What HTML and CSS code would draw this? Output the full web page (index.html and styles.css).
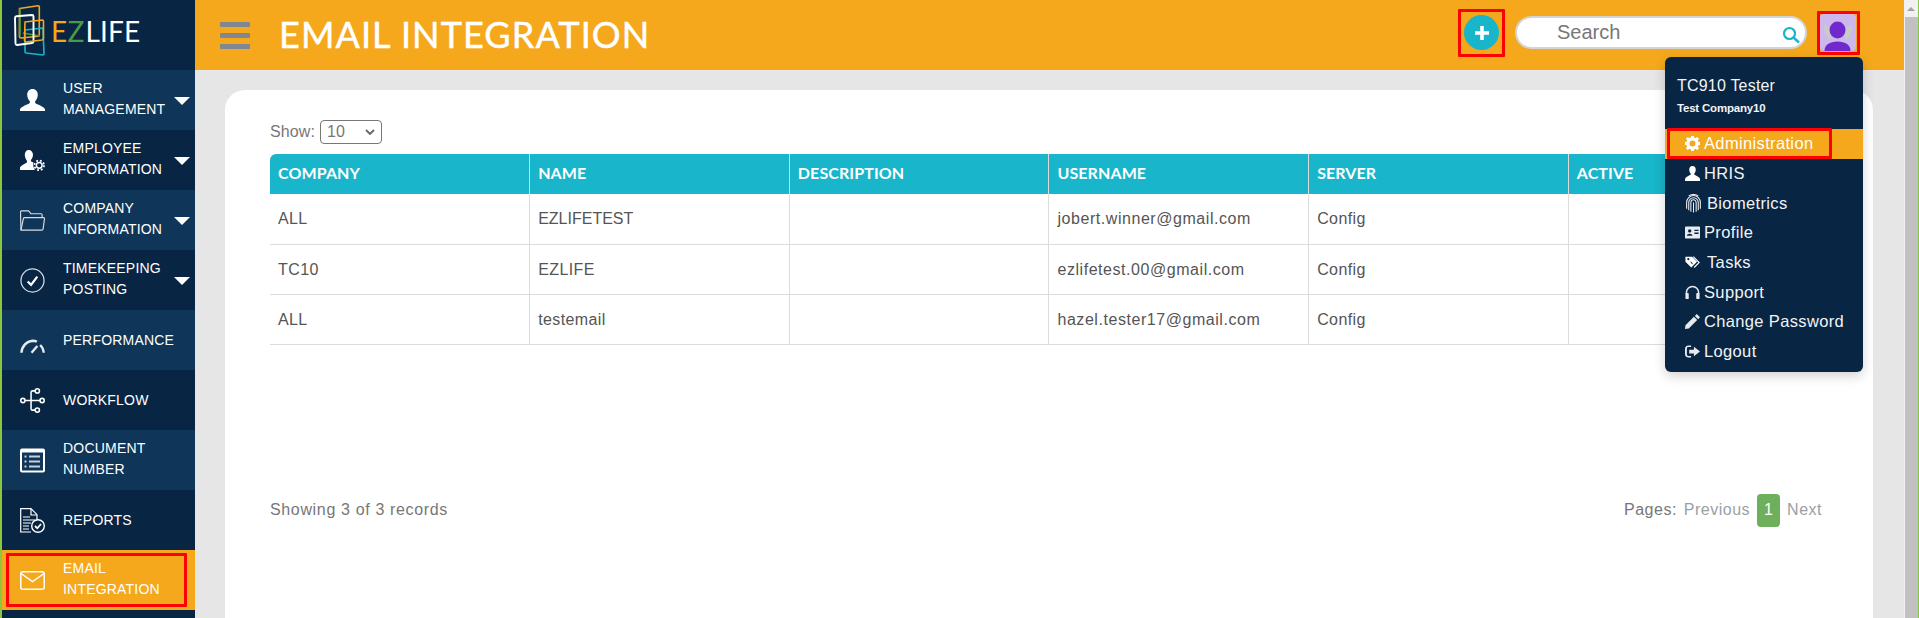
FILE: index.html
```html
<!DOCTYPE html>
<html lang="en">
<head>
<meta charset="utf-8">
<title>Email Integration</title>
<link rel="stylesheet" href="styles.css">
</head>
<body>
<div class="app">
  <aside class="sidebar">
    <div class="brand">
      <svg class="brand-mark" viewBox="0 0 40 54" width="40" height="54" fill="none" stroke-width="1.6" stroke-linejoin="round">
        <path d="M6 3.500 24.500 .8Q25.800.7 25.800 2V30Q25.800 31.200 24.500 31.300L7.500 33Q6 33 5.900 31.500Z" stroke="#f5a81c" transform="translate(-.5 0)"/>
        <path d="M6 3.500V31" stroke="#4b9b45"/>
        <path d="M9 28 26 31" stroke="#4b9b45"/>
        <path d="M11 26 29 24 30 50Q30 51 29 51L12 49Q11 49 11 48Z" stroke="#19b5ca" transform="translate(0 -1)"/>
        <path d="M1 13Q1 11.500 2.500 11.300L18 10Q19.500 10 19.500 11.500V36.500Q19.500 38 18 38L3 40Q1.600 40 1.500 38.500Z" stroke="#fff" stroke-width="1.900"/>
        <path d="M11 17 28 15Q29.500 15 29.500 16.500V33Q29.500 34.500 28 35L12 37Q10.500 37 10.500 35.500Z" stroke="#f5a81c"/>
      </svg>
      <div class="brand-name"><span class="brand-e">E</span><span class="brand-z">Z</span><span class="brand-life">LIFE</span></div>
    </div>
    <nav class="nav">
      <a class="nav-item alt">
        <svg class="nav-icon" viewBox="0 0 26 24" fill="#fff"><path d="M13 0c3.500 0 5.500 2.600 5.500 6 0 2.600-1 5-2.500 6.500-.5.600-.4 1.800.2 2.300 1 1 8.800 3.400 9.800 6.200V23H0v-2c1-2.800 8.800-5.200 9.800-6.200.6-.5.700-1.700.2-2.300C8.500 11 7.500 8.600 7.500 6c0-3.400 2-6 5.500-6z"/></svg>
        <span class="nav-label">USER<br>MANAGEMENT</span><i class="caret"></i>
      </a>
      <a class="nav-item">
        <svg class="nav-icon" viewBox="0 0 26 22" fill="#fff"><path d="M9 0c2.800 0 4.500 2.200 4.500 5 0 2.100-.8 4-2 5.200-.4.500-.3 1.400.2 1.800l2.300 1.200c-.6 1.500-.4 5 1.500 7.800H0v-2.800c.8-2.200 6.200-4.300 7-5.200.5-.4.500-1.300.1-1.800C5.800 9 5 7.100 5 5c0-2.800 1.500-5 4-5z"/><g fill="none" stroke="#fff"><circle cx="20" cy="16" r="3" stroke-width="1.600"/><circle cx="20" cy="16" r="5" stroke-width="1.800" stroke-dasharray="2 1.930"/></g></svg>
        <span class="nav-label">EMPLOYEE<br>INFORMATION</span><i class="caret"></i>
      </a>
      <a class="nav-item alt">
        <svg class="nav-icon" viewBox="0 0 26 22" fill="none" stroke="#d8dde2" stroke-width="1.200" stroke-linejoin="round"><path d="M1 21 .5 2Q.5 1 1.500 1H9l2.500 3H22q1 0 1 1v3"/><path d="M1 21 3.500 9Q3.800 8 5 8h19.500q1.200 0 1 1L24 20q-.2 1-1.200 1z"/></svg>
        <span class="nav-label">COMPANY<br>INFORMATION</span><i class="caret"></i>
      </a>
      <a class="nav-item">
        <svg class="nav-icon" viewBox="0 0 26 26" fill="none" stroke="#fff"><circle cx="13" cy="13" r="12" stroke="#d8dde2" stroke-width="1.300"/><path d="M8 14l3.500 3.500L18 9" stroke-width="2.300"/></svg>
        <span class="nav-label">TIMEKEEPING<br>POSTING</span><i class="caret"></i>
      </a>
      <a class="nav-item alt">
        <svg class="nav-icon low" viewBox="0 0 26 16" fill="none" stroke="#e8ebee"><path d="M1.500 15C2 8 7 3 13 2.500c2 0 3.500.3 4.500 1" stroke-width="2.600"/><path d="M21 7c2 2 3.500 5 3.700 8" stroke-width="2.400"/><path d="M12 15l6-7" stroke-width="2.400"/></svg>
        <span class="nav-label one">PERFORMANCE</span>
      </a>
      <a class="nav-item">
        <svg class="nav-icon" viewBox="0 0 26 26" fill="none" stroke="#fff" stroke-width="1.600"><circle cx="3" cy="13" r="2.200"/><circle cx="18" cy="3" r="2.200"/><circle cx="23" cy="13" r="2.200"/><circle cx="18" cy="23" r="2.200"/><path d="M5 13H21M15.800 3H13q-1.500 0-1.500 1.500v17q0 1.500 1.500 1.500h3"/></svg>
        <span class="nav-label one">WORKFLOW</span>
      </a>
      <a class="nav-item alt">
        <svg class="nav-icon" viewBox="0 0 25 24"><rect width="25" height="24" rx="2" fill="#fff"/><rect x="2" y="4" width="21" height="18" fill="#0f3558"/><path d="M4.500 8h2M9 8h11M4.500 13h2M9 13h11M4.500 18h2M9 18h11" stroke="#c8d2da" stroke-width="2.200"/></svg>
        <span class="nav-label">DOCUMENT<br>NUMBER</span>
      </a>
      <a class="nav-item">
        <svg class="nav-icon tall" viewBox="0 0 25 25" fill="none" stroke="#fff" stroke-width="1.200"><path d="M11 24H.7V.7H11l6 6V12"/><path d="M11 1v6h6"/><path d="M3 9h7M3 12h12M3 15h8M3 18h6M3 21h6"/><circle cx="18" cy="18" r="6.300" stroke-width="1.400"/><path d="M15 18l2.300 2.300 3.700-4.300" stroke-width="1.800"/></svg>
        <span class="nav-label one">REPORTS</span>
      </a>
      <a class="nav-item active">
        <svg class="nav-icon" viewBox="0 0 25 19" fill="none" stroke="#fff" stroke-width="1.500"><rect x=".8" y=".8" width="23.400" height="17.400" rx="2"/><path d="M1 2.500 12.500 10.500 24 2.500"/></svg>
        <span class="nav-label">EMAIL<br>INTEGRATION</span>
        <span class="mark mark-email"></span>
      </a>
    </nav>
  </aside>

  <div class="main">
    <header class="topbar">
      <div class="burger"><i></i><i></i><i></i></div>
      <h1 class="title">EMAIL INTEGRATION</h1>
      <div class="top-actions">
        <div class="add-wrap">
          <div class="add-btn">
            <svg viewBox="0 0 16 16" width="16" height="16"><path d="M8 1v14M1 8h14" stroke="#fff" stroke-width="3.600"/></svg>
          </div>
        </div>
        <div class="search">
          <span class="search-text">Search</span>
          <svg class="search-icon" viewBox="0 0 18 18" width="18" height="18" fill="none" stroke="#19b5ca"><circle cx="7.500" cy="7.500" r="5.500" stroke-width="2.200"/><path d="M11.500 11.500 17 16.500" stroke-width="2.400"/></svg>
        </div>
        <div class="avatar-wrap">
          <svg class="avatar" viewBox="0 0 36 37" width="36" height="37">
            <rect width="36" height="37" rx="4" fill="#cdb8ee"/>
            <path d="M4 11c4 1 7 3 9 7l-3 8C6 23 4 17 4 11zM32 11c-4 1-7 3-9 7l3 8c4-3 6-9 6-15z" fill="#c9cbc6"/>
            <ellipse cx="17.500" cy="16" rx="8" ry="8.500" fill="#7029cd"/>
            <path d="M4.500 37c0-6 5-9.500 13-9.500s13 3.500 13 9.500z" fill="#7029cd"/>
          </svg>
        </div>
      </div>
    </header>

    <section class="content">
      <div class="card">
        <div class="show-row">
          <span>Show:</span>
          <span class="select">10<svg viewBox="0 0 10 6" width="10" height="6" fill="none" stroke="#666" stroke-width="1.800"><path d="M1 1l4 4 4-4"/></svg></span>
        </div>
        <table class="grid">
          <thead>
            <tr><th>COMPANY</th><th>NAME</th><th>DESCRIPTION</th><th>USERNAME</th><th>SERVER</th><th>ACTIVE</th></tr>
          </thead>
          <tbody>
            <tr><td>ALL</td><td class="caps">EZLIFETEST</td><td></td><td class="mail">jobert.winner@gmail.com</td><td>Config</td><td></td></tr>
            <tr><td>TC10</td><td>EZLIFE</td><td></td><td class="mail">ezlifetest.00@gmail.com</td><td>Config</td><td></td></tr>
            <tr><td>ALL</td><td>testemail</td><td></td><td class="mail">hazel.tester17@gmail.com</td><td>Config</td><td></td></tr>
          </tbody>
        </table>
        <div class="footer-row">
          <span class="records">Showing 3 of 3 records</span>
          <div class="pager">
            <span class="pages">Pages:</span>
            <span class="muted">Previous</span>
            <span class="page-on">1</span>
            <span class="muted">Next</span>
          </div>
        </div>
      </div>
    </section>
  </div>

  <div class="scrollbar">
    <div class="scroll-btn"><i></i></div>
    <div class="scroll-thumb"></div>
  </div>
</div>

<div class="menu">
  <div class="menu-user">
    <div class="menu-name">TC910 Tester</div>
    <div class="menu-co">Test Company10</div>
  </div>
  <a class="menu-item on">
    <svg class="mi" viewBox="0 0 16 16" fill="#fff"><path d="M6.600 0h2.800l.4 2.200 1.300.6 1.900-1.300 2 2-1.300 1.900.6 1.300 2.200.4v2.800l-2.200.4-.6 1.300 1.300 1.900-2 2-1.900-1.300-1.300.6-.4 2.200H6.600l-.4-2.200-1.300-.6L3 15.500l-2-2 1.300-1.900-.6-1.300L-.5 9.900V7.100l2.200-.4.6-1.300L1 3.500l2-2 1.900 1.300 1.300-.6zM8 5.300a3.200 3.200 0 1 0 0 6.400 3.200 3.200 0 0 0 0-6.400z" fill-rule="evenodd" transform="translate(0 -.5)"/></svg>
    <span>Administration</span>
    <span class="mark mark-admin"></span>
  </a>
  <a class="menu-item"><svg class="mi" viewBox="0 0 16 16" fill="#fff"><path d="M8 0c2.200 0 3.500 1.700 3.500 3.900 0 1.600-.7 3.100-1.500 4-.3.400-.3 1.100.1 1.400C11 10 15 11.300 16 13.500V16H0v-2.500C1 11.300 5 10 5.900 9.300c.4-.3.400-1 .1-1.400-.8-.9-1.500-2.400-1.500-4C4.500 1.700 5.800 0 8 0z"/></svg><span>HRIS</span></a>
  <a class="menu-item bio"><svg class="mi bio-icon" viewBox="0 0 16 18" fill="none" stroke="#eef1f3" stroke-width="1"><path d="M1.500 14V8a6.500 6.500 0 0 1 13 0v6"/><path d="M3.500 15.500V8a4.500 4.500 0 0 1 9 0v7.500"/><path d="M5.500 16.800V8a2.500 2.500 0 0 1 5 0v8.800"/><path d="M8 8v9.500"/><path d="M3.500 1.800C6 .3 10 .3 12.500 1.800"/></svg><span>Biometrics</span></a>
  <a class="menu-item"><svg class="mi" viewBox="0 0 16 13" fill="#e8ebee"><path fill-rule="evenodd" d="M1 0h14q1 0 1 1v11q0 1-1 1H1q-1 0-1-1V1q0-1 1-1zM5 3a1.800 1.800 0 1 0 0 3.600A1.800 1.800 0 0 0 5 3zM2 10h6c0-3-6-3-6 0zM10 3.500V5h4.500V3.500zM10 6.500V8h4.500V6.500z"/></svg><span>Profile</span></a>
  <a class="menu-item tasks"><svg class="mi" viewBox="0 0 18 16" fill="none"><path d="M.5 2V8l7 7 7-7-6-6z" fill="#fff" transform="translate(0 -1)"/><path d="M10 1l7 7-6 6" stroke="#fff" stroke-width="1.300"/><circle cx="4" cy="4" r="1.300" fill="#082543"/><path d="M7 7l2 3" stroke="#082543" stroke-width="1.200"/></svg><span>Tasks</span></a>
  <a class="menu-item"><svg class="mi" viewBox="0 0 16 15" fill="none" stroke="#e8ebee"><path d="M1.500 10V7.500a6.500 6.500 0 0 1 13 0V10" stroke-width="1.600"/><rect x=".5" y="8" width="3.500" height="6.500" rx="1" fill="#e8ebee" stroke="none"/><rect x="12" y="8" width="3.500" height="6.500" rx="1" fill="#e8ebee" stroke="none"/></svg><span>Support</span></a>
  <a class="menu-item"><svg class="mi" viewBox="0 0 16 16" fill="#e8ebee"><path d="M12.500 0 16 3.500l-2 2L10.500 2zM9.500 3 13 6.500 4 15.500 0 16l.5-4z"/></svg><span>Change Password</span></a>
  <a class="menu-item"><svg class="mi" viewBox="0 0 16 13" fill="#e8ebee"><path d="M4 0h2.500v1.800H3.500Q2 1.800 2 3.300v6.400q0 1.500 1.500 1.500h3V13H4Q0 13 0 9V4Q0 0 4 0z"/><path d="M9.500 1.500 16 6.500l-6.500 5V8.500H4.500v-4h5z"/></svg><span>Logout</span></a>
</div>

<span class="mark mark-add"></span>
<span class="mark mark-avatar"></span>
</body>
</html>
```
FILE: styles.css
```css
* { box-sizing: border-box; }
html, body { margin: 0; height: 100%; overflow: hidden; }
body { font-family: "Liberation Sans", Arial, sans-serif; background: #e6e6e6; position: relative; }

.app { display: flex; height: 618px; border-left: 2px solid #8cc63f; border-right: 1px solid #8cc63f; }

/* Sidebar */
.sidebar { width: 193px; flex: none; background: #082543; display: flex; flex-direction: column; }
.brand { height: 70px; flex: none; display: flex; align-items: flex-start; padding: 5px 0 0 12px; }
.brand-mark { flex: none; }
.brand-name { font-family: Lato, sans-serif; font-size: 28px; line-height: 1; margin-left: -3px; margin-top: 12px; display: flex; letter-spacing: .2px; }
.brand-e { color: #f5a81c; }
.brand-z { color: #4b9b45; }
.brand-life { color: #fff; margin-left: 1px; font-weight: 400; }

.nav { display: flex; flex-direction: column; }
.nav-item { position: relative; height: 60px; display: flex; align-items: center; color: #fff; padding-left: 18px; font-size: 14px; line-height: 21px; }
.nav-item.alt { background: #0f3558; }
.nav-item.active { background: #f5a81c; }
.nav-icon { width: 25px; height: 25px; flex: none; margin-right: 18px; }
.nav-icon.low { align-self: flex-end; margin-bottom: 16px; height: 16px; }
.nav-label { letter-spacing: .2px; position: relative; top: -1px; }
.nav-label.one { top: 0; }
.caret { position: absolute; right: 5px; top: 27px; width: 0; height: 0; border-left: 8.500px solid transparent; border-right: 8.500px solid transparent; border-top: 8.500px solid #fff; }

/* Main column */
.main { flex: 1; min-width: 0; display: flex; flex-direction: column; }
.topbar { height: 70px; background: #f5a81c; display: flex; align-items: center; padding: 0 0 0 25px; flex: none; }
.burger { width: 30px; display: flex; flex-direction: column; gap: 6px; }
.burger i { display: block; height: 5px; background: #7f8790; border-radius: 1px; }
.title { margin: 0 0 0 29px; color: #fff; font-family: Lato, sans-serif; font-weight: 400; -webkit-text-stroke: .5px #fff; font-size: 36px; letter-spacing: 1.1px; line-height: 1; position: relative; top: -1px; }
.top-actions { margin-left: auto; display: flex; align-items: center; padding: 0 45px 5px 0; }
.add-wrap { width: 47px; height: 47px; flex: none; display: flex; align-items: center; justify-content: center; margin-right: 10px; }
.add-btn { width: 35px; height: 35px; flex: none; border-radius: 50%; background: #19b5ca; display: flex; align-items: center; justify-content: center; }
.search { position: relative; width: 292px; height: 33px; border-radius: 17px; background: #fff; border: 2px solid #d4d4d4; display: flex; align-items: center; padding-left: 40px; margin-right: 10px; }
.search-text { font-size: 20px; color: #777; }
.search-icon { position: absolute; right: 5px; top: 8px; }
.avatar-wrap { width: 42px; height: 43px; display: flex; align-items: center; justify-content: center; }

/* Card */
.content { flex: 1; padding: 20px 31px 0 30px; min-height: 0; }
.card { background: #fff; height: 100%; border-radius: 20px 20px 0 0; padding: 30px 45px 0 45px; color: #777; font-size: 16px; display: flex; flex-direction: column; }
.show-row { display: flex; align-items: center; gap: 5px; height: 24px; color: #777; letter-spacing: .1px; }
.select { width: 62px; height: 24px; border: 1px solid #777; border-radius: 4px; padding: 0 6px; font-size: 16px; display: flex; align-items: center; justify-content: space-between; color: #777; }
.grid { border-collapse: collapse; table-layout: fixed; width: 1558px; margin-top: 10px; }
.grid th { height: 40px; background: #19b5ca; color: #fff; font-family: Lato, sans-serif; font-weight: 700; font-size: 16px; text-align: left; padding: 0 8px 3px; border-left: 1px solid #dcdcdc; letter-spacing: .1px; }
.grid th:first-child { border-left: 0; border-top-left-radius: 6px; }
.grid td { height: 50px; padding: 1px 8px 0; color: #555; font-size: 16px; letter-spacing: .4px; border-left: 1px solid #dcdcdc; border-bottom: 1px solid #dcdcdc; }
.grid td:first-child { border-left: 0; }
.grid td.mail { letter-spacing: .55px; }
.grid td.caps { letter-spacing: 0; }
.footer-row { margin-top: 149px; width: 1558px; display: flex; align-items: center; justify-content: space-between; height: 33px; letter-spacing: .65px; }
.records { color: #777; }
.pager { display: flex; align-items: center; gap: 7px; padding-right: 6px; letter-spacing: .5px; }
.pages { color: #777; }
.muted { color: #9aa0a6; }
.page-on { width: 23px; height: 33px; border-radius: 4px; background: #6daf5a; color: #fff; display: flex; align-items: center; justify-content: center; }

/* Scrollbar */
.scrollbar { width: 14px; flex: none; background: #f1f1f1; display: flex; flex-direction: column; }
.scroll-btn { height: 17px; display: flex; align-items: center; justify-content: center; }
.scroll-btn i { width: 0; height: 0; border-left: 4px solid transparent; border-right: 4px solid transparent; border-bottom: 4px solid #a3a3a3; }
.scroll-thumb { flex: 1; background: #c1c1c1; margin-left: 1px; }

/* Dropdown */
.menu { position: absolute; left: 1665px; top: 57px; width: 198px; height: 315px; background: #082543; border-radius: 6px; color: #f2f4f6; box-shadow: 0 4px 12px rgba(0,0,0,.18); font-size: 15px; }
.menu-user { height: 72px; padding: 19px 0 0 12px; }
.menu-name { font-size: 16px; line-height: 20px; letter-spacing: .2px; }
.menu-co { font-size: 11.500px; line-height: 16px; margin-top: 4px; font-weight: 700; letter-spacing: -.2px; }
.menu-item { position: relative; height: 29.700px; display: flex; align-items: center; padding: 0 0 1px 20px; font-size: 16.500px; letter-spacing: .35px; gap: 4px; }
.menu-item.on { background: #f5a81c; color: #fff; height: 30px; }
.mi { width: 15px; height: 15px; flex: none; }
.bio-icon { width: 17px; height: 19px; }
.bio span { margin-left: 1px; }
.tasks span { margin-left: 3px; }

/* Red annotation frames */
.mark { position: absolute; border: 3px solid #f00; border-radius: 1px; pointer-events: none; }
.mark-email { left: 4px; top: 3px; width: 181px; height: 54px; }
.mark-admin { left: 2px; top: -1px; width: 165px; height: 31px; }
.mark-add { left: 1458px; top: 9px; width: 47px; height: 48px; }
.mark-avatar { left: 1817px; top: 11px; width: 43px; height: 44px; }
```
